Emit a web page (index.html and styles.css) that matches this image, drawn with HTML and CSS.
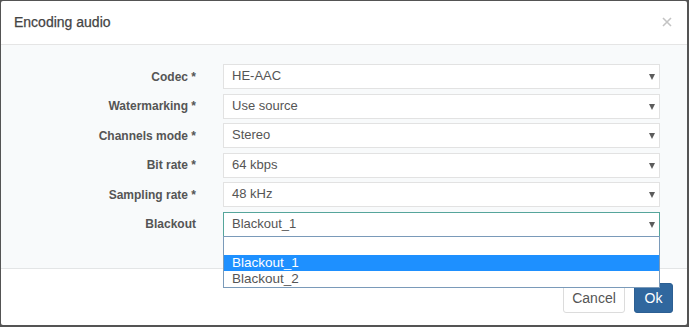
FILE: index.html
```html
<!DOCTYPE html>
<html lang="en">
<head>
    <meta charset="UTF-8">
    <meta name="viewport" content="width=device-width, initial-scale=1.0">
    <title>Encoding audio</title>
    <link rel="stylesheet" href="styles.css">
</head>
<body>
    <div class="modal">
        <div class="modal-header">
            <h4 class="modal-title">Encoding audio</h4>
            <span class="close">
                <svg width="10" height="10" viewBox="0 0 10 10">
                    <path d="M1 1 L9 9 M9 1 L1 9" stroke="#c4c4c4" stroke-width="1.6" fill="none"/>
                </svg>
            </span>
        </div>

        <div class="modal-body">
            <div class="form-row">
                <label>Codec *</label>
                <div class="select">HE-AAC<span class="caret"></span></div>
            </div>
            <div class="form-row">
                <label>Watermarking *</label>
                <div class="select">Use source<span class="caret"></span></div>
            </div>
            <div class="form-row">
                <label>Channels mode *</label>
                <div class="select">Stereo<span class="caret"></span></div>
            </div>
            <div class="form-row">
                <label>Bit rate *</label>
                <div class="select">64 kbps<span class="caret"></span></div>
            </div>
            <div class="form-row">
                <label>Sampling rate *</label>
                <div class="select">48 kHz<span class="caret"></span></div>
            </div>
            <div class="form-row">
                <label>Blackout</label>
                <div class="select focused">Blackout_1<span class="caret"></span>
                    <ul class="dropdown">
                        <li class="empty"></li>
                        <li class="selected">Blackout_1</li>
                        <li>Blackout_2</li>
                    </ul>
                </div>
            </div>
        </div>

        <div class="modal-footer">
            <button class="btn btn-default">Cancel</button>
            <button class="btn btn-primary">Ok</button>
        </div>
    </div>
</body>
</html>
```

FILE: styles.css
```css
body {
    margin: 0;
    width: 689px;
    height: 327px;
    background-color: #545454;
    font-family: "Liberation Sans", Arial, sans-serif;
    color: #555;
    overflow: hidden;
}

.modal {
    margin: 1px 2px 0 1px;
    height: 324px;
    background-color: white;
    border-radius: 2px;
    display: flex;
    flex-direction: column;
}

.modal-header {
    height: 43px;
    border-bottom: 1px solid #e5e5e5;
    display: flex;
    align-items: center;
    justify-content: space-between;
    padding: 0 15px 0 13px;
}

.modal-title {
    margin: 0;
    font-size: 14px;
    font-weight: normal;
    color: #444;
    padding-bottom: 2px;
    -webkit-text-stroke: 0.25px #444;
}

.close {
    display: flex;
    padding-bottom: 2px;
}

.modal-body {
    height: 204px;
    padding-top: 19px;
    background-color: #f8fafb;
    border-bottom: 1px solid #e3e5e6;
    display: flex;
    flex-direction: column;
    gap: 4.6px;
}

.form-row {
    display: flex;
    align-items: center;
}

.form-row label {
    width: 195px;
    text-align: right;
    font-size: 12px;
    font-weight: bold;
    color: #555;
    margin-right: 27px;
}

.select {
    position: relative;
    box-sizing: border-box;
    width: 437px;
    height: 25px;
    border: 1px solid #e2e2e2;
    background-color: white;
    font-size: 13px;
    color: #555;
    line-height: 22px;
    padding-left: 8px;
}

.select.focused {
    border-color: #55a59b;
}

.caret {
    position: absolute;
    right: 4px;
    top: 9px;
    width: 0;
    height: 0;
    border-left: 3.5px solid transparent;
    border-right: 3.5px solid transparent;
    border-top: 6px solid #5c5c5c;
}

.dropdown {
    position: absolute;
    left: -1px;
    top: 23px;
    width: 437px;
    box-sizing: border-box;
    margin: 0;
    padding: 0;
    list-style: none;
    background-color: white;
    border: 1px solid #7a9ab9;
    z-index: 2;
}

.dropdown li {
    height: 16px;
    line-height: 16px;
    padding-left: 8px;
    font-size: 13.5px;
    color: #555;
}

.dropdown li.empty {
    height: 18px;
}

.dropdown li.selected {
    background-color: #1e90ff;
    color: white;
}

.modal-footer {
    flex: 1;
    display: flex;
    justify-content: flex-end;
    align-items: flex-start;
    gap: 9px;
    padding: 14px 14px 0 0;
}

.btn {
    height: 30px;
    font-family: "Liberation Sans", Arial, sans-serif;
    font-size: 14px;
    border-radius: 3px;
    cursor: pointer;
}

.btn-default {
    width: 62px;
    background-color: white;
    color: #555;
    border: 1px solid #dcdcdc;
}

.btn-primary {
    width: 39px;
    background-color: #30679e;
    color: white;
    border: 1px solid #2c5f93;
}
```
